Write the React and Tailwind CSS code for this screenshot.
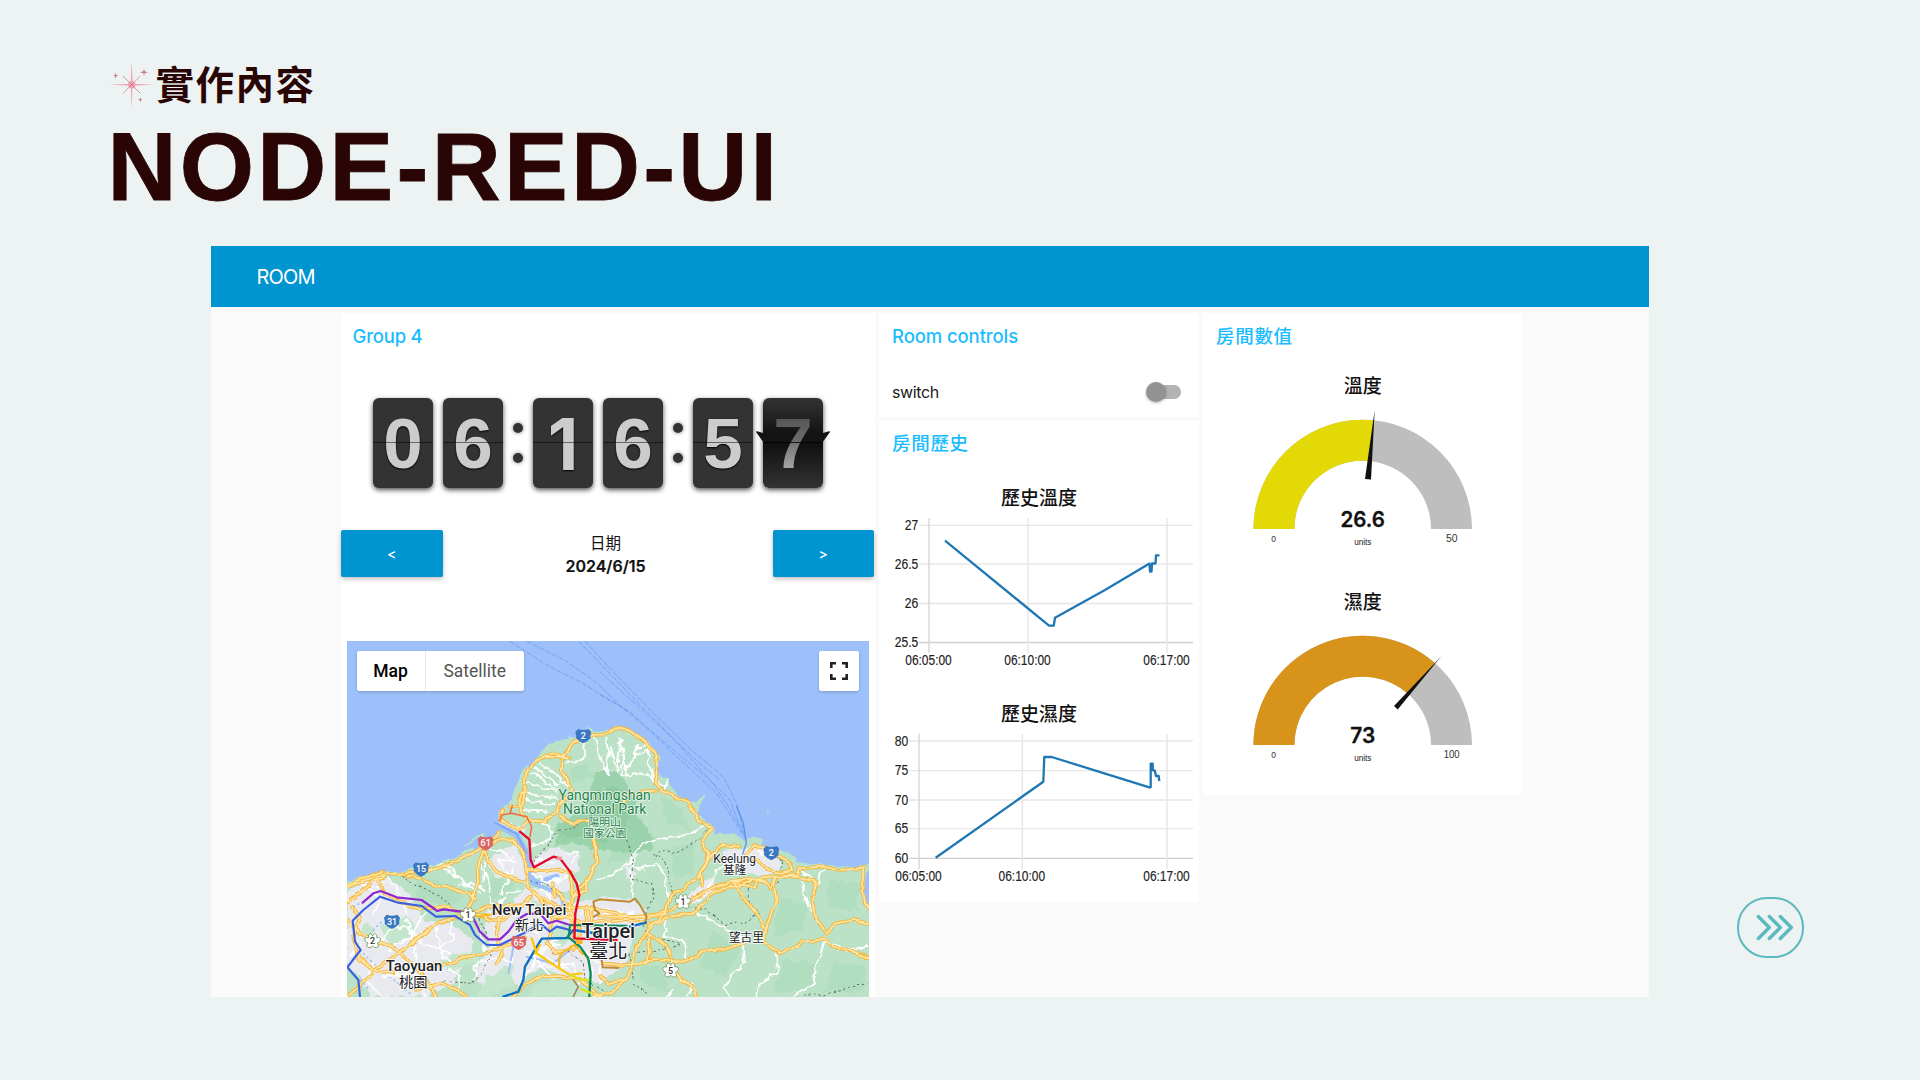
import React from "react";

const UI = "Inter, 'Noto Sans CJK TC', sans-serif";
const HELV = "'Liberation Sans', 'Noto Sans CJK TC', sans-serif";
const MAPF = "Roboto, 'Noto Sans CJK TC', sans-serif";

function Sparkle() {
  return (
    <svg className="ml-px h-[48px] w-[46px] shrink-0" viewBox="0 0 138 144">
      <g fill="#f2a3b5">
        <path d="M68 2 L71 62 L68 142 L65 62Z" />
        <path d="M0 71 L68 68 L136 71 L68 74Z" />
        <circle cx="68" cy="71" r="11" />
      </g>
      <g stroke="#c06a7e" strokeWidth="2">
        <path d="M42 45 L94 97 M94 45 L42 97" />
      </g>
      <g fill="#c77a8d">
        <path d="M20 34 L22 42 L28 44 L22 46 L20 54 L18 46 L12 44 L18 42Z" />
        <path d="M105 22 L107 31 L117 34 L107 37 L105 46 L103 37 L93 34 L103 31Z" />
        <path d="M94 108 L96 114 L99 116 L96 118 L94 123 L92 118 L88 116 L92 114Z" />
      </g>
    </svg>
  );
}

/* Inter's "1" has no foot, as on a real split-flap display. */
const digitFont = (value) => ({ fontFamily: value === "1" ? "Inter, sans-serif" : HELV });

function Digit({ value }) {
  return (
    <div className="relative h-[90px] w-[60px] rounded-[6px] bg-[#333] shadow-[0_2px_5px_rgba(0,0,0,0.7)]">
      <div
        className="pt-px text-center text-[71px] font-bold leading-[90px] text-[#ccc] [text-shadow:0_1px_2px_#000]"
        style={digitFont(value)}
      >
        {value}
      </div>
      <div className="absolute left-0 top-[44px] h-px w-full bg-black/50" />
    </div>
  );
}

function FlippingDigit({ value }) {
  return (
    <div className="relative h-[90px] w-[60px] rounded-[6px] bg-[linear-gradient(#333_0%,#0c0c0c_48%,#111_52%,#333_100%)] shadow-[0_2px_5px_rgba(0,0,0,0.7)]">
      <svg className="absolute -left-[7px] top-0 h-[90px] w-[74px]" viewBox="0 0 74 90">
        <path d="M0 34 Q0 33 2 33.500 L7 35 H67 L72 33.500 Q74 33 74 34 L66 45 H8Z" fill="#131313" />
      </svg>
      <div
        className="relative bg-[linear-gradient(#555_22%,#6c6c6c_47%,#7c7c7c_53%,#a6a6a6_78%)] bg-clip-text pt-px text-center text-[71px] font-bold leading-[90px] text-transparent"
        style={digitFont(value)}
      >
        {value}
      </div>
      <div className="absolute left-0 top-[44px] h-px w-full bg-black/80" />
    </div>
  );
}

function Colon() {
  return (
    <div className="flex h-[90px] w-[30px] flex-col items-center justify-center gap-5">
      <div className="size-[10px] rounded-full bg-[#333] shadow-[0_0_4px_rgba(0,0,0,0.5)]" />
      <div className="size-[10px] rounded-full bg-[#333] shadow-[0_0_4px_rgba(0,0,0,0.5)]" />
    </div>
  );
}

const yellowRoads = [
  "M20 772 L60 758 L110 738 L145 732 L200 730 L262 724 L300 712 L350 694 L400 668 L440 645 L478 606",
  "M20 766 L100 734 L130 722",
  "M440 655 L470 630 L515 628 L540 650 L556 690 L560 740 L565 775",
  "M435 660 L440 690 L470 725 L520 748 L565 762",
  "M430 665 L412 710 L414 760 L395 810 L375 850",
  "M200 740 L240 745 L290 768 L340 775 L390 790 L405 810",
  "M20 815 L60 790 L100 750 L130 740",
  "M110 745 L135 790 L175 812 L240 838 L310 830 L380 850 L420 855 L450 870 L490 870 L530 835 L570 800",
  "M20 1100 L80 1045 L130 1000 L190 960 L240 920 L290 880 L350 860 L395 852 L440 830 L540 826",
  "M20 870 L60 910 L110 935 L160 950 L200 985 L250 1035 L285 1100",
  "M35 830 L60 860 L40 920 L60 990 L100 1020 L160 1030",
  "M250 1010 L300 1005 L340 1000 L375 980 L430 975 L470 955 L520 940 L555 925",
  "M230 1080 L300 1060 L350 1080 L380 1100",
  "M520 1100 L560 1060 L610 1040 L660 1038 L720 1050 L780 1100",
  "M480 860 L470 910 L485 960 L470 1000",
  "M510 530 L545 525 L560 420 L590 390 L640 370 L670 380 L700 335 L760 312 L805 310 L825 295 L865 300 L915 335 L945 370 L952 410 L944 460 L970 485 L1045 515 L1060 540 L1075 575 L1115 595 L1085 630 L1105 670 L1100 700 L1075 740 L1030 775 L990 800 L975 850 L925 900 L890 950 L865 1040 L820 1085 L760 1100",
  "M545 490 L535 510 L550 560 L600 575 L650 550 L660 520 L695 480 L665 425 L670 380",
  "M620 380 L690 385",
  "M490 540 L480 565 L500 580 L540 600 L570 570 L620 575",
  "M660 560 L700 580 L750 570 L765 640 L770 700 L750 740 L700 800 L690 830",
  "M850 520 L860 490 L945 482",
  "M780 860 L850 860 L920 855 L985 842 L1040 820 L1085 790 L1140 765 L1180 755 L1260 745 L1320 740 L1365 735",
  "M620 842 L700 832 L780 838 L880 862 L930 860 L980 850",
  "M640 860 L700 865 L720 880 L860 870 L930 880",
  "M925 890 L990 860 L1060 850 L1110 800 L1150 770 L1200 770 L1240 750",
  "M1085 770 L1080 730 L1110 680",
  "M1110 680 L1150 645 L1195 650 M1215 680 L1240 645 L1275 650 L1310 675 L1340 685 L1360 720 L1330 730 L1280 720 L1250 690 L1225 690",
  "M1180 755 L1215 770 L1245 770 L1260 745 L1290 775 L1305 740 L1370 740 L1380 715 L1450 710 L1500 720 L1560 715 L1575 710 L1565 750 L1575 820 L1585 835",
  "M1360 740 L1420 750 L1430 770 L1415 810 L1425 860 L1460 910 L1490 880 L1540 870 L1585 880",
  "M1180 760 L1215 810 L1250 850 L1275 900 L1270 940 L1320 970 L1390 935 L1455 928 L1480 950 L1550 965 L1585 985",
  "M1275 900 L1290 860 L1310 810 L1300 760",
  "M925 910 L960 930 L985 960 L1000 1010 L1030 1050 L1060 1075 L1068 1100",
  "M925 910 L930 970 L920 1000 L840 1005 L790 1000 M900 1000 L940 990 L1030 995 L1060 985 L1090 960 L1150 960 L1210 940",
  "M650 780 L680 820 L700 860 L720 900 L700 960 M700 800 L740 780 L735 750",
  "M560 720 L620 720 L690 725 L700 800",
  "M565 775 L600 800 L650 830 L690 850 L700 920",
  "M580 790 L620 830 L640 870 L620 940 L650 970 L700 950 L720 930",
  "M780 1040 L800 1060 L860 1050",
  "M740 830 L740 900 M755 830 L755 870 M640 760 L645 800",
];

const goldRoads = [
  "M375 855 L430 860 L480 845",
  "M655 1015 L665 970 L700 945 L720 935",
  "M700 945 L720 960 L745 990",
];

const whiteRoads = [
  "M600 400 L640 430 L690 470 M585 410 L620 440 L655 460 M570 430 L600 440 L650 480 M560 460 L600 465 L650 490 M558 490 L650 505 M556 510 L640 525 M550 540 L620 545 M600 575 L630 590 L630 630 L575 650",
  "M725 330 L740 370 L720 390 L680 400 M760 320 L775 370 L800 430 L810 350 L830 420 L845 330 M800 320 L805 430 M835 320 L860 420 L890 360 L920 340",
  "M855 370 L840 440 L900 430 L945 440 M895 345 L860 430 M880 380 L930 360 L920 400 L950 440 M920 430 L975 475 L985 450",
  "M770 750 L790 740 L830 725 L870 700 L885 660 L920 640 L990 620 L1050 615 L1095 580",
  "M875 700 L900 720 L950 700 L975 740 L985 800",
  "M890 670 L870 720 L880 800",
  "M975 870 L980 900 L970 920 L1030 930 L1040 985 M1060 845 L1110 870 L1160 900 L1210 930 L1215 1000 L1180 1030 L1150 1070 L1170 1100",
  "M1390 750 L1395 810 L1420 850 L1440 870 M1455 930 L1430 1000 L1420 1060 L1360 1100 M1310 970 L1310 1030 L1260 1060 L1250 1100 M1380 720 L1430 760 L1450 715",
  "M140 740 L170 770 L200 850 M30 810 L90 770 L130 760 M70 760 L120 810 L100 850 M300 705 L350 740 L420 790 M320 700 L380 770 M440 690 L430 760 M450 660 L480 660 L530 700 M480 700 L520 680 M520 720 L480 790",
  "M140 960 L200 930 L260 850 M180 970 L240 1050 L260 1100 M110 940 L150 900 L200 890 L250 940 L330 970 M100 1000 L80 1050 L120 1100 M200 870 L230 960 L220 1010 M290 890 L300 960 L340 1000 M330 870 L340 930 L290 960",
  "M400 1050 L410 1000 L470 980 L520 990 M420 900 L430 960 L500 950 M560 960 L600 1000 L640 1050 M560 1040 L600 960 L660 940 M600 780 L630 800 L640 840 M590 1010 L700 1000 L720 1060",
  "M610 760 L690 740 L720 760 M580 730 L620 760 L660 740 M690 700 L715 670 L680 665 M720 850 L880 850 M730 830 L760 870 M1040 1100 L1060 1060 M980 1100 L1000 1080",
  "M1585 950 L1520 960 L1480 940 M720 950 L780 1000 L780 1060 M560 880 L600 920 L600 980",
  "M480 690 L490 720 L520 735 M360 770 L400 760 L430 780 M130 1040 L180 1030 L230 1060 M150 990 L200 1020 L190 1080 M60 940 L30 980 M330 1020 L360 1040 L350 1080 M580 700 L610 690 L640 700",
  "M480 820 L500 790 L540 780 M450 800 L460 830 M420 700 L440 740 L450 780 M620 980 L680 1020 M580 980 L650 930 M740 960 L760 1030 M830 840 L840 870 M800 840 L810 880",
  "M1160 700 L1130 720 L1100 780 M1060 800 L1080 810 L1110 770 M1250 660 L1280 680",
];

const dashed = [
  "M187 735 L200 750 L240 770 L310 805 L350 850 L400 840",
  "M580 695 L620 650 L660 600 L700 595 L750 560 L800 540",
  "M575 750 L620 765 L670 790",
  "M940 690 L960 660 L1000 670 L1060 640 L1110 590 M940 670 L975 690 L985 740 L1000 790 L1040 830 L1100 840 L1150 880 L1210 880 L1260 850 L1225 820 L1225 760",
  "M860 630 L880 690 L870 740 L935 760 L940 800 L920 850 L910 890 L930 920 L1020 940 L990 955 L870 970 L880 1060 L920 1090",
  "M270 1070 L320 1055 L400 1060 L440 1000 L460 960",
  "M410 850 L440 910 M1390 1095 L1450 1095 L1510 1075 L1585 1060 M1310 760 L1330 690 L1310 680",
  "M640 970 L680 960 L730 1000 L735 1050 L800 1090",
];

const urban = [
  "M21 785 L90 745 L150 740 L200 790 L250 870 L330 880 L400 930 L380 990 L340 1060 L260 1101 L90 1101 L60 1040 L21 1010Z",
  "M430 850 L500 830 L560 770 L640 790 L700 820 L800 800 L890 810 L920 860 L880 900 L860 1000 L780 1060 L700 1050 L600 1010 L540 1060 L440 1090 L400 1030 L450 950Z",
  "M575 690 L610 660 L660 655 L720 680 L715 720 L680 740 L720 790 L640 780 L590 740Z",
  "M440 690 L530 640 L550 690 L560 750 L470 740Z",
  "M480 575 L550 590 L560 610 L500 600Z M1150 660 L1250 650 L1300 670 L1330 710 L1280 740 L1150 720Z",
  "M1110 740 L1140 780 L1060 820 L1040 800Z M850 700 L890 730 L860 745Z",
];

const blobs = [
  "M120 880 L200 860 L230 900 L150 960Z",
  "M300 985 L390 960 L420 990 L330 1030Z",
  "M440 1040 L520 1000 L520 1070 L450 1101 L410 1101Z",
  "M630 890 L680 880 L700 930 L650 950Z M575 800 L610 830 L590 860Z",
  "M60 905 L80 880 L110 900 L80 940Z M210 1070 L240 1050 L260 1090Z",
  "M590 1060 L700 1045 L780 1101 L560 1101Z",
];

const relief = [
  "M230 740 L330 760 L370 800 L310 830 L230 800Z",
  "M460 740 L520 760 L510 800 L455 810Z",
  "M960 500 L1020 530 L1050 600 L980 580Z",
  "M990 650 L1070 640 L1060 730 L1000 740Z",
  "M1120 900 L1200 960 L1150 1040 L1080 1010Z",
  "M1320 800 L1400 830 L1390 900 L1300 920Z",
  "M1470 750 L1560 760 L1550 840 L1460 830Z",
  "M1330 990 L1430 1000 L1400 1080 L1300 1090Z",
  "M1480 1000 L1580 1010 L1570 1080 L1450 1090Z",
  "M690 420 L740 400 L760 440 L700 460Z",
  "M900 1010 L960 1010 L990 1090 L900 1060Z",
  "M840 600 L930 610 L860 690 L800 700Z",
];

function MapLabel({ x, y, size, w, children, color = "#202124", weight = 400, halo = "#ffffff" }) {
  return (
    <text
      x={x}
      y={y}
      fontSize={size}
      fontWeight={weight}
      fill={color}
      stroke={halo}
      strokeWidth="5"
      strokeLinejoin="round"
      paintOrder="stroke"
      textAnchor="middle"
      textLength={w}
      lengthAdjust="spacingAndGlyphs"
    >
      {children}
    </text>
  );
}

function Shield({ x, y, n, color }) {
  return (
    <g transform={`translate(${x} ${y})`}>
      <path
        d="M-16 -21 Q0 -15 16 -21 L24 -12 Q20 0 22 6 Q12 18 0 22 Q-12 18 -22 6 Q-20 0 -24 -12Z"
        fill={color}
      />
      <text y="9" fontSize="27" fontWeight="500" fill="#fff" textAnchor="middle">{n}</text>
    </g>
  );
}

function Blossom({ x, y, n }) {
  return (
    <g transform={`translate(${x} ${y})`}>
      <path
        d="M0 -16 Q5 -27 12 -18 Q13 -10 12 -10 Q26 -12 23 -2 Q20 6 14 6 Q22 18 11 20 Q4 21 0 15 Q-4 21 -11 20 Q-22 18 -14 6 Q-20 6 -23 -2 Q-26 -12 -12 -10 Q-13 -10 -12 -18 Q-5 -27 0 -16Z"
        fill="#fff"
        stroke="#6a9a5b"
        strokeWidth="2.5"
      />
      <text y="10" fontSize="27" fontWeight="500" fill="#333" textAnchor="middle">{n}</text>
    </g>
  );
}

function TerrainMap() {
  return (
    <svg
      className="block h-full w-full"
      viewBox="21 33 1566 1068"
      preserveAspectRatio="none"
      fill="none"
      strokeLinejoin="round"
      strokeLinecap="round"
      style={{ fontFamily: MAPF }}
    >
      <filter id="meander" x="-2%" y="-2%" width="104%" height="104%" colorInterpolationFilters="sRGB">
        <feTurbulence type="fractalNoise" baseFrequency="0.03" numOctaves="2" seed="4" />
        <feDisplacementMap in="SourceGraphic" scale="16" xChannelSelector="R" yChannelSelector="G" />
      </filter>
      <filter id="wander" x="-2%" y="-2%" width="104%" height="104%" colorInterpolationFilters="sRGB">
        <feTurbulence type="fractalNoise" baseFrequency="0.04" numOctaves="2" seed="9" />
        <feDisplacementMap in="SourceGraphic" scale="26" xChannelSelector="R" yChannelSelector="G" />
      </filter>
      <rect x="0" y="0" width="1600" height="1110" fill="#9dc0fa" />
      <g filter="url(#meander)">
        <path
          fill="#bbe2c6"
          d="M10 757 L60 742 L120 725 L190 722 L240 712 L300 700 L350 682 L400 662 L440 640 L470 605 L480 600 L500 600 L540 620 L550 600 L480 578 L475 550 L505 520 L520 490 L540 440 L555 408 L570 405 L600 370 L640 335 L685 325 L685 313 L700 325 L735 300 L742 290 L760 303 L800 300 L830 291 L880 308 L930 340 L958 380 L955 420 L960 440 L985 448 L990 470 L1030 505 L1060 520 L1100 490 L1075 530 L1070 555 L1120 590 L1122 612 L1180 612 L1215 630 L1240 620 L1270 628 L1260 650 L1300 655 L1350 672 L1365 685 L1370 700 L1400 700 L1470 705 L1540 712 L1600 700 L1572 745 L1575 810 L1600 845 V1120 H10Z"
        />
        <path fill="#bbe2c6" d="M362 655 L425 605 L432 612 L372 650Z M362 668 L400 648 L402 658 L370 675Z M1280 548 l6 -5 l4 4 l-6 5Z" />
      </g>
      <g fill="#aadbb9" opacity="0.55" filter="url(#wander)">
        {relief.map((d) => <path key={d} d={d} />)}
      </g>
      <path
        filter="url(#wander)"
        fill="#9ad2ab"
        d="M755 460 L765 430 L795 420 L830 425 L860 460 L880 500 L890 560 L945 620 L930 660 L850 670 L780 660 L700 640 L640 650 L650 620 L640 600 L690 560 L740 530Z"
      />
      <path filter="url(#wander)" fill="#8dcba0" opacity="0.8" d="M770 480 L840 470 L870 540 L850 600 L790 640 L720 620 L660 620 L700 580 L760 560Z" />
      <g fill="#e9eaef" filter="url(#wander)">
        {urban.map((d) => <path key={d} d={d} />)}
      </g>
      <g fill="#c3e6cc" filter="url(#wander)">
        {blobs.map((d) => <path key={d} d={d} />)}
      </g>
      <path d="M450 575 L530 615 L555 660 L572 700 L572 745 L590 760 L650 740" stroke="#9dc0fa" strokeWidth="18" />
      <path d="M465 578 L530 612 L560 670" stroke="#7ba5ee" strokeWidth="5" />
      <path d="M575 760 L620 775 L665 800 L670 830" stroke="#9dc0fa" strokeWidth="10" />
      <path d="M505 1030 L515 980 L525 920 M560 980 L640 1000 L690 960" stroke="#9dc0fa" strokeWidth="6" />
      <g stroke="#9dc0fa" strokeWidth="5" strokeDasharray="3 12">
        <path d="M60 960 L110 1010 M100 900 L130 870 M60 1050 L90 1080 M40 830 L60 820 M150 1040 L210 1090" />
      </g>
      <g stroke="#fff" strokeWidth="5.500" filter="url(#wander)">
        {whiteRoads.map((d) => <path key={d} d={d} />)}
      </g>
      <g stroke="#5e6b66" strokeWidth="3" strokeDasharray="7 8" strokeLinecap="butt" filter="url(#meander)">
        {dashed.map((d) => <path key={d} d={d} />)}
      </g>
      <g filter="url(#meander)">
        <g stroke="#f5b53a" strokeWidth="11">
          {yellowRoads.map((d) => <path key={d} d={d} />)}
        </g>
        <g stroke="#ffe8a6" strokeWidth="5">
          {yellowRoads.map((d) => <path key={d} d={d} />)}
        </g>
        <g stroke="#f9b51d" strokeWidth="6">
          {goldRoads.map((d) => <path key={d} d={d} />)}
        </g>
      </g>
      <g stroke="#6d9cf0" strokeWidth="2.500" strokeDasharray="16 5" strokeLinecap="butt">
        <path d="M508 33 L620 105 L720 155 L850 235 L930 300 L1030 385 L1110 450 L1160 520 L1215 620" />
        <path d="M560 33 L680 95 L760 150 L860 245" />
        <path d="M715 33 L790 110 L900 225 L1000 325 L1100 440 L1170 510 L1217 630" />
        <path d="M735 33 L800 105 L930 240 L1060 365 L1150 440 L1190 520 L1218 630" />
        <path d="M780 195 L870 245 L1010 380 L1130 490 L1205 610" />
        <path d="M780 125 L960 290 L1090 410 L1140 450" />
      </g>
      <path d="M1190 530 L1210 580 L1219 640 L1208 672" stroke="#5f92ef" strokeWidth="4" />
      <path d="M480 572 L485 555 L515 550 L560 560 L575 590 L570 620 M510 550 L517 528" stroke="#ef6b3b" strokeWidth="4.500" />
      <path d="M780 808 L760 815 L765 840 L778 850 L762 860 M778 808 L870 815 L885 806 L900 825 L920 860 L915 878 M785 990 L788 1012 L835 1014" stroke="#bf8a35" strokeWidth="6" />
      <path d="M700 1100 L715 1070 L700 1050" stroke="#a08c62" strokeWidth="5" />
      <path d="M68 818 L100 790 L122 783 L170 802 L245 810 L292 843 L310 838 L365 845 L400 865 L420 905 L445 928 L480 928 L505 905 L530 870 L560 852 L600 850 L625 880 L650 872 L690 885" stroke="#8f27d0" strokeWidth="6.500" />
      <path d="M60 1100 L55 1050 L22 1012 L50 975 L62 960 L45 935 L38 872 L70 840 L120 800 L175 818 L245 828 L288 860 L345 858 L390 885 L405 915 L440 945 L480 945 L510 930 L560 905 L600 880 L630 905 L650 890 L690 900" stroke="#3a5fe0" strokeWidth="6.500" />
      <path d="M490 1100 L535 1085 L550 1050 L555 1010 L605 926 L680 924 L700 900 L780 912 M870 890 L918 878" stroke="#0b70c4" strokeWidth="7" />
      <path d="M575 925 L590 970 L650 1010 L690 1035 L725 1030 M585 970 L600 945" stroke="#f9c80c" strokeWidth="7" />
      <path d="M685 925 L690 885 L860 887" stroke="#11895a" strokeWidth="6" />
      <path d="M690 925 L720 950 L745 985 L752 1030 L748 1100" stroke="#0a8a55" strokeWidth="7" />
      <path d="M690 1035 L720 1048 L745 1050 M725 1078 L750 1088" stroke="#dfe11a" strokeWidth="7" />
      <path d="M540 605 L568 628 L572 690 L582 712 L640 680 L660 685 L690 725 L710 760 L718 795 L706 850 L703 925 L830 930" stroke="#e2062c" strokeWidth="7" />
      <rect x="650" y="680" width="16" height="10" fill="#f3969b" />
      <rect x="708" y="930" width="20" height="12" fill="#f8b42c" />

      <MapLabel x={794} y={511} size={42} w={277} color="#25834a" halo="#eaf6ed">Yangmingshan</MapLabel>
      <MapLabel x={794} y={553} size={42} w={250} color="#25834a" halo="#eaf6ed">National Park</MapLabel>
      <MapLabel x={794} y={589} size={32} w={97} color="#25834a" halo="#eaf6ed">陽明山</MapLabel>
      <MapLabel x={794} y={622} size={32} w={130} color="#25834a" halo="#eaf6ed">國家公園</MapLabel>
      <MapLabel x={1184} y={698} size={37} w={128}>Keelung</MapLabel>
      <MapLabel x={1184} y={733} size={34} w={70}>基隆</MapLabel>
      <MapLabel x={1219} y={936} size={36} w={106}>望古里</MapLabel>
      <MapLabel x={567} y={855} size={45} w={224} weight={500}>New Taipei</MapLabel>
      <MapLabel x={567} y={900} size={42} w={86}>新北</MapLabel>
      <MapLabel x={805} y={924} size={59} w={161} weight={500}>Taipei</MapLabel>
      <MapLabel x={805} y={984} size={58} w={116}>臺北</MapLabel>
      <MapLabel x={222} y={1024} size={45} w={170} weight={500}>Taoyuan</MapLabel>
      <MapLabel x={220} y={1070} size={42} w={86}>桃園</MapLabel>

      <Shield x={730} y={318} n="2" color="#3a78c3" />
      <Shield x={243} y={718} n="15" color="#3a78c3" />
      <Shield x={156} y={875} n="31" color="#3a78c3" />
      <Shield x={1294} y={669} n="2" color="#3a78c3" />
      <Shield x={437} y={640} n="61" color="#db6465" />
      <Shield x={536} y={938} n="65" color="#db6465" />
      <Blossom x={384} y={855} n="1" />
      <Blossom x={98} y={933} n="2" />
      <Blossom x={1029} y={815} n="1" />
      <Blossom x={992} y={1021} n="5" />
    </svg>
  );
}

/* Chart coordinates are measured from the chart's own top-left corner. */
function LineChart({ title, yTicks, xTicks, left, top, bottom, labelRight, points }) {
  return (
    <svg className="block h-[216px] w-[320px]" viewBox="0 0 320 216" style={{ fontFamily: HELV }}>
      <text x="160" y="34.800" textAnchor="middle" fontSize="19" fontWeight="500" fill="#111" textLength="76" style={{ fontFamily: UI }}>
        {title}
      </text>
      {yTicks.map((t, i) => (
        <g key={t.label}>
          <line
            x1={left - 10}
            x2="314"
            y1={t.y}
            y2={t.y}
            stroke={i === yTicks.length - 1 ? "#cfcfcf" : "#e7e7e7"}
            strokeWidth="1.3"
          />
          <text x={labelRight} y={t.y + 4.500} textAnchor="end" fontSize="14" fill="#222" stroke="#222" strokeWidth="0.15" textLength={t.w} lengthAdjust="spacingAndGlyphs">
            {t.label}
          </text>
        </g>
      ))}
      {xTicks.map((t, i) => (
        <g key={t.label}>
          <line x1={t.x} x2={t.x} y1={top} y2={bottom} stroke={i === 0 ? "#d9d9d9" : "#e7e7e7"} strokeWidth="1.5" />
          <text x={t.x - 0.500} y={bottom + 12.300} textAnchor="middle" fontSize="14" fill="#222" stroke="#222" strokeWidth="0.15" textLength="46.5" lengthAdjust="spacingAndGlyphs">
            {t.label}
          </text>
        </g>
      ))}
      <polyline points={points} fill="none" stroke="#1f77b4" strokeWidth="2.300" strokeLinejoin="round" />
    </svg>
  );
}

function Gauge({ title, value, valueWidth, max, maxWidth, ratio, color, needle }) {
  const cx = 159.700;
  const cy = 165;
  const R = 109.300;
  const r = 68.300;
  const a = Math.PI * (1 - ratio);
  const at = (rad) => `${cx + rad * Math.cos(a)} ${cy - rad * Math.sin(a)}`;
  return (
    <svg className="block h-[216px] w-[320px]" viewBox="0 0 320 216" style={{ fontFamily: HELV }}>
      <text x={cx} y="28.500" textAnchor="middle" fontSize="19" fontWeight="500" fill="#111" textLength="38" style={{ fontFamily: UI }}>
        {title}
      </text>
      <path d={`M${cx - R} ${cy} A${R} ${R} 0 0 1 ${cx + R} ${cy} H${cx + r} A${r} ${r} 0 0 0 ${cx - r} ${cy}Z`} fill="#bebebe" />
      <path d={`M${cx - R} ${cy} A${R} ${R} 0 0 1 ${at(R)} L${at(r)} A${r} ${r} 0 0 0 ${cx - r} ${cy}Z`} fill={color} />
      <path d={needle} fill="#111" />
      <text x={cx} y="163.300" textAnchor="middle" fontSize="21" fontWeight="600" fill="#111" stroke="#111" strokeWidth="0.3" textLength={valueWidth} lengthAdjust="spacingAndGlyphs" style={{ fontFamily: UI }}>
        {value}
      </text>
      <text x={cx} y="181.300" textAnchor="middle" fontSize="9" fill="#111" textLength="17" lengthAdjust="spacingAndGlyphs">units</text>
      <text x="70.700" y="178" textAnchor="middle" fontSize="8.5" fill="#333">0</text>
      <text x="248.700" y="178" textAnchor="middle" fontSize="10.5" fill="#333" textLength={maxWidth} lengthAdjust="spacingAndGlyphs">{max}</text>
    </svg>
  );
}

function Heading({ children, className = "" }) {
  return <h2 className={`text-[18.5px] font-medium leading-6 text-[#1bbcff] ${className}`}>{children}</h2>;
}

export default function App() {
  return (
    <div className="flex h-[1080px] w-[1920px] flex-col overflow-hidden bg-[#edf3f3]" style={{ fontFamily: UI }}>
      <header className="h-[246px] pl-[107.5px] pt-[60px] text-[#290505]">
        <div className="flex h-[50px] items-center">
          <Sparkle />
          <span className="-mt-[7px] ml-[1px] text-[38.5px] font-bold leading-[50px] tracking-[1.5px]" style={{ fontFamily: "'Noto Sans CJK TC', sans-serif" }}>
            實作內容
          </span>
        </div>
        <h1 className="mt-[3px] text-[95.5px] font-bold leading-[108px] tracking-[3.3px] [-webkit-text-stroke:0.8px_#290505]" style={{ fontFamily: HELV }}>
          NODE-RED-UI
        </h1>
      </header>

      <div className="flex">
        <main className="ml-[211px] flex h-[751px] w-[1438px] flex-col bg-[#fafafa]">
          <div className="flex h-[61px] items-center bg-[#0094d0] pl-[45.5px] text-[20px] tracking-[-0.8px] text-white">ROOM</div>

          <div className="flex flex-1 items-start gap-[4px] pl-[130px] pt-[6px]">
            <section className="flex h-[684px] w-[534px] flex-col bg-white">
              <Heading className="pl-[11.5px] pt-[11px] tracking-[-0.2px]">Group 4</Heading>
              <div className="flex gap-[10px] pl-[32px] pt-[50px]">
                <Digit value="0" />
                <div className="flex">
                  <Digit value="6" />
                  <Colon />
                  <Digit value="1" />
                </div>
                <div className="flex">
                  <Digit value="6" />
                  <Colon />
                  <Digit value="5" />
                </div>
                <FlippingDigit value="7" />
              </div>
              <div className="flex justify-between pr-px pt-[42px]">
                <button className="h-[47px] w-[101.5px] rounded-[2px] bg-[#0094d0] text-[14px] font-medium text-white shadow-[0_2px_5px_rgba(0,0,0,0.26)]">&lt;</button>
                <div className="flex flex-col items-center pr-[4px] pt-[2px] text-[16px] leading-[23px] text-[#111]">
                  <div className="text-[15.5px]">日期</div>
                  <div className="font-semibold [-webkit-text-stroke:0.2px_#111]">2024/6/15</div>
                </div>
                <button className="h-[47px] w-[101.5px] rounded-[2px] bg-[#0094d0] text-[14px] font-medium text-white shadow-[0_2px_5px_rgba(0,0,0,0.26)]">&gt;</button>
              </div>
              <div className="relative ml-[6px] mt-auto h-[356px] w-[522px]">
                <TerrainMap />
                <div className="absolute left-[9.5px] right-[10.5px] top-[9.5px] flex items-start justify-between" style={{ fontFamily: MAPF }}>
                  <div className="flex h-[40px] rounded-[2px] bg-white text-[17.5px] leading-[40px] shadow-[0_1px_3px_rgba(0,0,0,0.2)]">
                    <div className="w-[69px] border-r border-[#e6e6e6] text-center font-medium text-black">Map</div>
                    <div className="w-[98.5px] text-center text-[#565656]">Satellite</div>
                  </div>
                  <div className="flex size-[40px] items-center justify-center rounded-[2px] bg-white shadow-[0_1px_3px_rgba(0,0,0,0.2)]">
                    <svg className="size-[18px]" viewBox="0 0 18 18" fill="none" stroke="#222" strokeWidth="2.6">
                      <path d="M1.300 6V1.300H6 M12 1.300H16.700V6 M16.700 12V16.700H12 M6 16.700H1.300V12" />
                    </svg>
                  </div>
                </div>
              </div>
            </section>

            <div className="flex w-[320px] flex-col gap-[4px]">
              <section className="h-[104px] bg-white px-[13px] pt-[11px]">
                <Heading className="tracking-[-0.1px]">Room controls</Heading>
                <div className="flex items-center justify-between pr-[5px] pt-[30px]">
                  <span className="text-[16px] leading-7 tracking-[-0.4px] text-[#1a1a1a]">switch</span>
                  <div className="relative h-[14px] w-[34px] rounded-full bg-[#b3b3b3]">
                    <div className="absolute -left-px -top-[3px] size-[20px] rounded-full bg-[#929292] shadow-[0_1px_3px_rgba(0,0,0,0.3)]" />
                  </div>
                </div>
              </section>
              <section className="h-[481px] bg-white pt-[10px]">
                <Heading className="pl-[13px] tracking-[0.7px]">房間歷史</Heading>
                <div className="pt-[15px]">
                  <LineChart
                    title="歷史溫度"
                    left={50}
                    top={48}
                    bottom={182.700}
                    labelRight={39.300}
                    yTicks={[
                      { label: "27", y: 55.300, w: 13.500 },
                      { label: "26.5", y: 94, w: 23.500 },
                      { label: "26", y: 133.500, w: 13.500 },
                      { label: "25.5", y: 172.500, w: 23.500 },
                    ]}
                    xTicks={[
                      { label: "06:05:00", x: 50 },
                      { label: "06:10:00", x: 149 },
                      { label: "06:17:00", x: 288 },
                    ]}
                    points="66,70.700 138.700,130 170,155.700 174.700,155.700 176,147.700 226,120 270.500,93.500 271,101.700 272.500,101.700 273,93.500 276.500,93.500 277,85.300 280.500,85.300"
                  />
                  <LineChart
                    title="歷史濕度"
                    left={40}
                    top={47.700}
                    bottom={183}
                    labelRight={29.300}
                    yTicks={[
                      { label: "80", y: 55, w: 13.500 },
                      { label: "75", y: 84.700, w: 13.500 },
                      { label: "70", y: 114, w: 13.500 },
                      { label: "65", y: 142.700, w: 13.500 },
                      { label: "60", y: 172.300, w: 13.500 },
                    ]}
                    xTicks={[
                      { label: "06:05:00", x: 40 },
                      { label: "06:10:00", x: 143.300 },
                      { label: "06:17:00", x: 288 },
                    ]}
                    points="56.700,171.700 164.300,95.700 165.300,71 172.700,71 270.300,101.300 271.700,101.300 271.700,77.700 273.700,77.700 273.700,84.300 275.700,84.300 277,90 279.700,90 280.300,95"
                  />
                </div>
              </section>
            </div>

            <section className="h-[481.5px] w-[319px] bg-white pt-[11px]">
              <Heading className="pl-[13px] tracking-[0.7px]">房間數值</Heading>
              <div className="pt-[16px]">
                <Gauge
                  title="溫度"
                  value="26.6"
                  valueWidth="44.500"
                  max="50"
                  maxWidth="11.500"
                  ratio={0.532}
                  color="#e3d906"
                  needle="M171.700 46 L162 115 L168 115.500Z"
                />
                <Gauge
                  title="濕度"
                  value="73"
                  valueWidth="25"
                  max="100"
                  maxWidth="16"
                  ratio={0.73}
                  color="#d8931a"
                  needle="M238.300 76.300 L191 126 L194.700 129.500Z"
                />
              </div>
            </section>
          </div>
        </main>

        <svg className="ml-[88px] mt-[651px] h-[61px] w-[67px]" viewBox="0 0 67 61" fill="none" stroke="#5cb9be" strokeLinecap="round" strokeLinejoin="round">
          <rect x="1" y="1" width="65" height="59" rx="29" strokeWidth="2" />
          <path d="M21.300 19.500 L32.300 30.500 L21.300 41.500 M32.300 19.500 L43.300 30.500 L32.300 41.500 M43.300 19.500 L54.300 30.500 L43.300 41.500" strokeWidth="3.4" />
        </svg>
      </div>
    </div>
  );
}
